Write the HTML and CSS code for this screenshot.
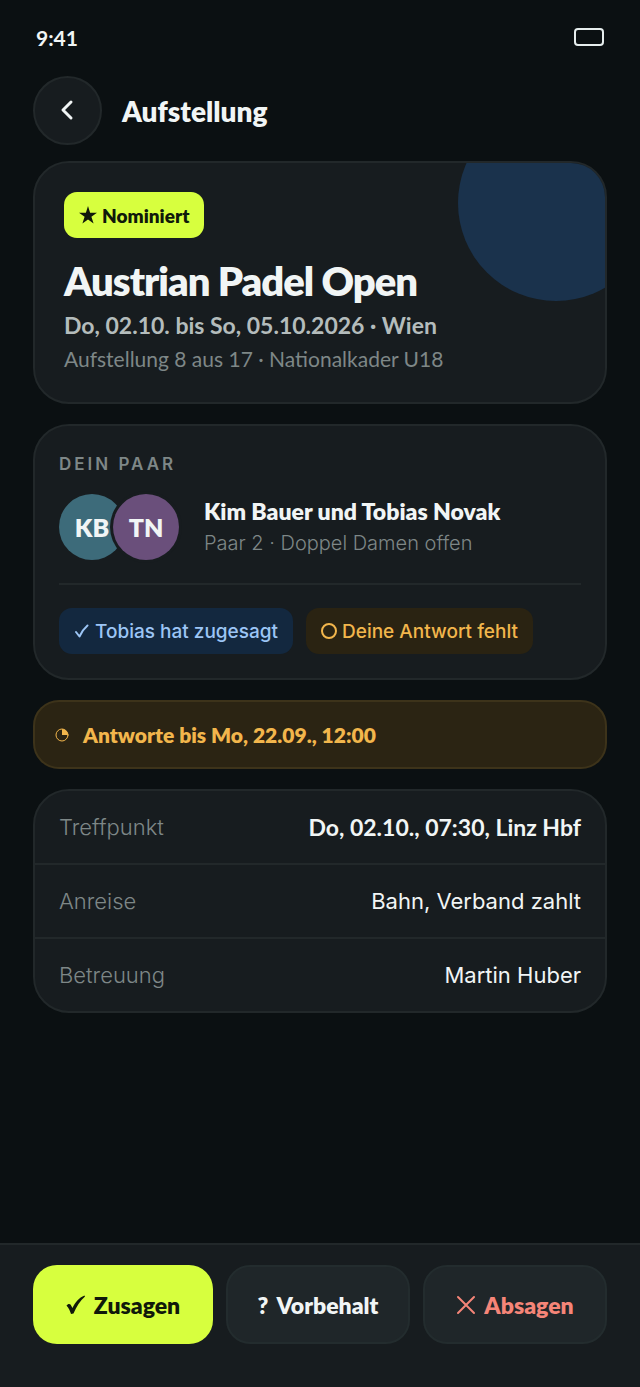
FILE: index.html
```html
<!DOCTYPE html>
<html lang="de">
<head>
    <meta charset="UTF-8">
    <meta name="viewport" content="width=device-width, initial-scale=1.0">
    <title>Aufstellung - Austrian Padel Open</title>
    <link rel="stylesheet" href="styles.css">
</head>
<body>
    <div class="app">
        <div class="statusbar">
            <span>9:41</span>
            <span class="battery"></span>
        </div>

        <header class="topbar">
            <button class="back-button" aria-label="Zurück">
                <svg width="16" height="24" viewBox="0 0 16 24"><path d="M11 3 3 11l8 8"/></svg>
            </button>
            <h1>Aufstellung</h1>
        </header>

        <main>
            <section class="card event">
                <span class="tag tag-lime">
                    <svg width="18" height="18" viewBox="0 0 18 18"><path class="solid" d="M9 0l2.1 6.7H18l-5.6 4.1 2.2 6.8L9 13.4l-5.6 4.2 2.2-6.8L0 6.700h6.900z"/></svg>
                    Nominiert
                </span>
                <h2>Austrian Padel Open</h2>
                <p class="date">Do, 02.10. bis So, 05.10.2026 · Wien</p>
                <p class="squad">Aufstellung 8 aus 17 · Nationalkader U18</p>
            </section>

            <section class="card pair">
                <h3>Dein Paar</h3>
                <div class="players">
                    <div class="avatars">
                        <span class="avatar teal">KB</span>
                        <span class="avatar purple">TN</span>
                    </div>
                    <div>
                        <p class="names">Kim Bauer und Tobias Novak</p>
                        <p class="category">Paar 2 · Doppel Damen offen</p>
                    </div>
                </div>
                <div class="answers">
                    <span class="tag tag-blue">
                        <svg width="16" height="16" viewBox="0 0 16 16"><path d="M2 9 5.500 13.500C7.500 9 10 5.500 13.500 2.500"/></svg>
                        Tobias hat zugesagt
                    </span>
                    <span class="tag tag-amber">
                        <svg width="16" height="16" viewBox="0 0 16 16"><circle cx="8" cy="8" r="7"/></svg>
                        Deine Antwort fehlt
                    </span>
                </div>
            </section>

            <div class="deadline">
                <svg width="14" height="14" viewBox="0 0 14 14"><circle cx="7" cy="7" r="6"/><path class="solid" d="M7 1v6h6a6 6 0 0 0-6-6z"/></svg>
                <span>Antworte bis Mo, 22.09., 12:00</span>
            </div>

            <dl class="card details">
                <div class="row">
                    <dt>Treffpunkt</dt>
                    <dd class="strong">Do, 02.10., 07:30, Linz Hbf</dd>
                </div>
                <div class="row">
                    <dt>Anreise</dt>
                    <dd>Bahn, Verband zahlt</dd>
                </div>
                <div class="row">
                    <dt>Betreuung</dt>
                    <dd>Martin Huber</dd>
                </div>
            </dl>
        </main>

        <footer class="actions">
            <button class="accept">
                <svg width="20" height="20" viewBox="0 0 20 20"><path class="solid" d="M.500 10.500C1.500 9 3.500 8.500 4.500 9.500L6.500 13C9 7.500 13 2.500 18.500.500L19 1.500C14 6 10.500 11.500 7.500 18.500L5 19C4 16 2.800 13 .500 10.500z"/></svg>
                Zusagen
            </button>
            <button><span>?</span> Vorbehalt</button>
            <button class="decline">
                <svg width="20" height="20" viewBox="0 0 20 20"><path d="M2 2l16 16M18 2 2 18"/></svg>
                Absagen
            </button>
        </footer>
    </div>
</body>
</html>
```
FILE: styles.css
```css
* {
    box-sizing: border-box;
}
body {
    margin: 0;
    background-color: #0b1012;
    color: #f1f5f5;
    font-family: Inter, "Noto Sans", sans-serif;
}
h1, h2, h3, p, dl, dd {
    margin: 0;
}
svg {
    flex: none;
    fill: none;
    stroke: currentColor;
    stroke-width: 2;
    stroke-linecap: round;
    stroke-linejoin: round;
}
.solid {
    fill: currentColor;
    stroke: none;
}
.app {
    display: flex;
    flex-direction: column;
    min-height: 100vh;
}
.statusbar {
    display: flex;
    justify-content: space-between;
    align-items: center;
    height: 76px;
    padding: 0 36px 2px;
    font-family: Lato, sans-serif;
    font-size: 21px;
    font-weight: 700;
}
.battery {
    width: 30px;
    height: 18px;
    border: 2px solid #e6eded;
    border-radius: 4px;
}
.topbar {
    display: flex;
    align-items: center;
    gap: 20px;
    padding: 0 33px;
}
.topbar h1 {
    font-family: Lato, sans-serif;
    font-size: 28px;
    font-weight: 800;
}
.back-button {
    display: flex;
    align-items: center;
    justify-content: center;
    width: 69px;
    height: 69px;
    padding: 0;
    border: 2px solid #22282a;
    border-radius: 50%;
    background-color: #171c1f;
    color: #f1f5f5;
}
.back-button svg {
    stroke-width: 3;
}
main {
    display: flex;
    flex-direction: column;
    gap: 20px;
    padding: 16px 33px 20px;
}
.card {
    border: 2px solid #22282a;
    border-radius: 36px;
    background-color: #171c1f;
}

/* event */
.event {
    position: relative;
    overflow: hidden;
    padding: 29px 29px 27px;
}
.event::after {
    content: "";
    position: absolute;
    top: -58px;
    right: -49px;
    width: 196px;
    height: 196px;
    border-radius: 50%;
    background-color: #1a324c;
}
.tag {
    display: inline-flex;
    align-items: center;
    gap: 5px;
    height: 46px;
    padding: 0 15px;
    border-radius: 13px;
    font-size: 19px;
    font-weight: 500;
}
.tag-lime {
    display: flex;
    width: fit-content;
    background-color: #d7ff3e;
    color: #10190a;
    font-family: Lato, sans-serif;
    font-weight: 800;
}
.event h2 {
    margin-top: 20px;
    font-family: Lato, sans-serif;
    font-size: 40px;
    font-weight: 800;
    line-height: 46px;
    letter-spacing: -1px;
}
.event p {
    font-family: Lato, sans-serif;
    line-height: 33px;
}
.event .date {
    margin-top: 5px;
    color: #b4bcbc;
    font-size: 23px;
    font-weight: 700;
}
.event .squad {
    color: #7e8787;
    font-size: 21px;
}

/* pair */
.pair {
    padding: 24px;
}
.pair h3 {
    color: #7e8787;
    font-size: 17px;
    font-weight: 600;
    line-height: 28px;
    letter-spacing: 3px;
    text-transform: uppercase;
}
.players {
    display: flex;
    align-items: center;
    gap: 25px;
    margin-top: 16px;
    padding-bottom: 23px;
    border-bottom: 2px solid #22282a;
}
.avatars {
    display: flex;
}
.avatar {
    display: flex;
    align-items: center;
    justify-content: center;
    width: 66px;
    height: 66px;
    border-radius: 50%;
    font-family: Lato, sans-serif;
    font-size: 25px;
    font-weight: 800;
}
.teal {
    background-color: #3d6b7a;
}
.purple {
    margin-left: -12px;
    background-color: #6a4f7b;
    box-shadow: 0 0 0 3px #171c1f;
}
.names {
    font-family: Lato, sans-serif;
    font-size: 23px;
    font-weight: 800;
    line-height: 32px;
}
.category {
    color: #7e8787;
    font-size: 20px;
    font-weight: 300;
    line-height: 32px;
}
.answers {
    display: flex;
    flex-wrap: wrap;
    gap: 13px;
    margin-top: 23px;
}
.tag-blue {
    background-color: #13283f;
    color: #9cc5f5;
}
.tag-amber {
    background-color: #2a2312;
    color: #f2b64c;
}

/* deadline */
.deadline {
    display: flex;
    align-items: center;
    gap: 14px;
    height: 69px;
    padding: 0 20px;
    border: 2px solid #3d331a;
    border-radius: 26px;
    background-color: #2b2413;
    color: #f2b64c;
    font-family: Lato, sans-serif;
    font-size: 21px;
    font-weight: 800;
}
.deadline svg {
    stroke-width: 1;
}

/* details */
.row {
    display: flex;
    align-items: center;
    justify-content: space-between;
    box-sizing: content-box;
    height: 72px;
    padding: 0 24px;
    font-size: 22px;
}
.row + .row {
    border-top: 2px solid #22282a;
}
.row dt {
    color: #7e8787;
    font-weight: 300;
}
.row dd {
    font-weight: 400;
}
.row .strong {
    font-family: Lato, sans-serif;
    font-size: 23px;
    font-weight: 700;
}

/* actions */
.actions {
    display: flex;
    gap: 13px;
    margin-top: auto;
    padding: 20px 33px 43px;
    border-top: 2px solid #22282a;
    background-color: #171c1f;
}
.actions button {
    display: flex;
    flex: 1;
    align-items: center;
    justify-content: center;
    gap: 8px;
    height: 79px;
    padding: 0;
    border: 2px solid #232c2e;
    border-radius: 24px;
    background-color: #1f2629;
    color: #f1f5f5;
    font-family: Lato, sans-serif;
    font-size: 23px;
    font-weight: 800;
}
.actions .accept {
    border: none;
    background-color: #d7ff3e;
    color: #10190a;
}
.actions .decline {
    color: #f58578;
}
```
